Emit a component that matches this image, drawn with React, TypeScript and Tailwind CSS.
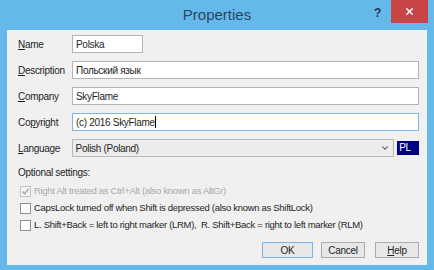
import { ChevronDown, X } from 'lucide-react'

const font = { fontFamily: '"Liberation Sans", Arial, sans-serif' }

function Field({ label, value, focused }: { label: [string, string, string]; value: string; focused?: boolean }) {
  return (
    <div className="flex items-center h-[18px]">
      <span className="w-[54px] text-[#1e1e1e]">
        {label[0]}
        <span className="underline">{label[1]}</span>
        {label[2]}
      </span>
      <div
        className={`flex-1 h-[18px] flex items-center px-[3px] bg-white border ${
          focused ? 'border-[#7eb4ea]' : 'border-[#b3b3b3]'
        }`}
      >
        {value}
        {focused && <span className="w-px h-[12px] bg-black" />}
      </div>
    </div>
  )
}

function Check({ label, checked, disabled }: { label: string; checked?: boolean; disabled?: boolean }) {
  return (
    <div
      className={`flex items-center h-[17px] pl-[2px] gap-[3px] whitespace-pre text-[9.5px] tracking-[-0.3px] ${
        disabled ? 'text-[#a8a8a8]' : 'text-[#1e1e1e]'
      }`}
    >
      <span
        className={`w-[11px] h-[11px] border flex items-center justify-center shrink-0 ${
          disabled ? 'border-[#c6c6c6] bg-[#f4f4f4]' : 'border-[#8f8f8f] bg-white'
        }`}
      >
        {checked && (
          <svg width="9" height="9" viewBox="0 0 9 9">
            <path d="M1.5 4.5 L3.6 6.8 L7.6 1.8" fill="none" stroke="#a8a8a8" strokeWidth="1.4" />
          </svg>
        )}
      </span>
      <span>{label}</span>
    </div>
  )
}

export default function App() {
  return (
    <div
      className="w-[434px] h-[270px] bg-[#65b9ea] flex flex-col text-[10px] tracking-[-0.3px] text-[#1e1e1e]"
      style={font}
    >
      {/* Title bar */}
      <div className="h-[30px] flex items-start relative">
        <div className="flex-1 text-center text-[15px] tracking-normal text-[#2b4660] pt-[4px]">Properties</div>
        <span className="absolute left-[374px] top-[4px] text-[12px] font-bold text-[#1d3550]">?</span>
        <div className="absolute left-[391px] top-0 w-[37px] h-[23px] bg-[#c74545] flex items-center justify-center">
          <X className="w-[11px] h-[11px] text-white" strokeWidth={3} />
        </div>
      </div>

      {/* Content */}
      <div className="flex-1 mx-[7px] mb-[5px] bg-[#f0f0f0] pt-[5px] pl-[11px] pr-[8px] flex flex-col">
        <div className="flex flex-col gap-[8px]">
          <div className="flex items-center h-[18px]">
            <span className="w-[54px]">
              <span className="underline">N</span>ame
            </span>
            <div className="w-[71px] h-[18px] flex items-center px-[3px] bg-white border border-[#b3b3b3]">Polska</div>
          </div>
          <Field label={['', 'D', 'escription']} value="Польский язык" />
          <Field label={['', 'C', 'ompany']} value="SkyFlame" />
          <Field label={['Co', 'p', 'yright']} value="(c) 2016 SkyFlame" focused />
          <div className="flex items-center h-[18px]">
            <span className="w-[54px]">
              <span className="underline">L</span>anguage
            </span>
            <div className="w-[325px] h-[18px] flex items-center px-[3px] bg-[#ececec] border border-[#b8b8b8]">
              <span className="flex-1">Polish (Poland)</span>
              <ChevronDown className="w-[10px] h-[10px] text-[#444]" strokeWidth={2.5} />
            </div>
            <div className="ml-[3px] w-[22px] h-[14px] bg-[#000080] text-white text-[10px] pl-[2px] leading-[14px]">PL</div>
          </div>
        </div>

        <div className="mt-[8px] h-[14px] flex items-center">Optional settings:</div>
        <div className="mt-[4px] flex flex-col">
          <Check label="Right Alt treated as Ctrl+Alt (also known as AltGr)" checked disabled />
          <Check label="CapsLock turned off when Shift is depressed (also known as ShiftLock)" />
          <Check label="L. Shift+Back = left to right marker (LRM),  R. Shift+Back = right to left marker (RLM)" />
        </div>

        <div className="mt-[8px] flex justify-end gap-[8px]">
          <button className="w-[51px] h-[16px] border border-[#7fb6e6] bg-[#e7e7e7]">OK</button>
          <button className="w-[44px] h-[16px] border border-[#acacac] bg-[#e7e7e7]">Cancel</button>
          <button className="w-[44px] h-[16px] border border-[#acacac] bg-[#e7e7e7] ml-[2px]">
            <span className="underline">H</span>elp
          </button>
        </div>
      </div>
    </div>
  )
}
